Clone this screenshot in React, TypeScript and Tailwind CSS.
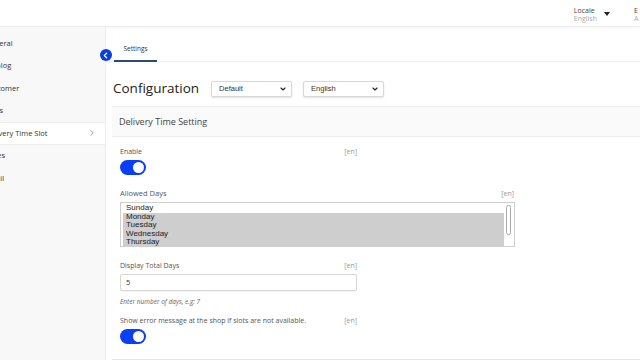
import React from 'react';
import { ChevronLeft, ChevronRight, ChevronDown } from 'lucide-react';

const font = { fontFamily: '"Open Sans", "Noto Sans", sans-serif' };

const Toggle = () => (
  <div className="w-[26px] h-[15px] rounded-full bg-[#0b3ff5] flex items-center justify-end pr-[2px]">
    <div className="w-[11px] h-[11px] rounded-full bg-white" />
  </div>
);

const Select = ({ value }: { value: string }) => (
  <div className="w-[81px] h-[16px] border border-[#d8d8d8] rounded-[2px] shadow-[0_1px_2px_rgba(0,0,0,0.12)] bg-white flex items-center justify-between pl-[7px] pr-[4px]">
    <span className="text-[7.5px] text-[#333]" style={{ fontFamily: '"Liberation Sans", Arial, sans-serif' }}>{value}</span>
    <ChevronDown size={8} strokeWidth={3.5} className="text-[#222]" />
  </div>
);

const sidebarItems = ['General', 'Catalog', 'Customer', 'Sales', 'Delivery Time Slot', 'Taxes', 'Email'];

export default function App() {
  return (
    <div className="w-[640px] h-[360px] overflow-hidden bg-white flex flex-col" style={font}>
      {/* Top bar */}
      <div className="h-[27px] shrink-0 border-b border-[#ececec] shadow-[0_1px_2px_rgba(0,0,0,0.04)] flex items-start justify-end pt-[7px]">
        <div className="flex items-start gap-[7px] mr-[24px]">
          <div className="flex flex-col leading-[8px]">
            <span className="text-[7px] text-[#444]">Locale</span>
            <span className="text-[7px] text-[#aaa]">English</span>
          </div>
          <svg width="6" height="4" viewBox="0 0 6 4" className="mt-[5px]"><path d="M0 0h6L3 4z" fill="#222" /></svg>
        </div>
        <div className="flex flex-col leading-[8px] w-[6px] overflow-hidden">
          <span className="text-[7px] text-[#444]">E</span>
          <span className="text-[7px] text-[#aaa]">A</span>
        </div>
      </div>

      <div className="flex flex-1 min-h-0">
        {/* Sidebar */}
        <div className="w-[106px] shrink-0 bg-[#f8f8f9] border-r border-[#ececec] overflow-hidden pt-[5px]">
          {sidebarItems.map((item) => {
            const active = item === 'Delivery Time Slot';
            return (
              <div
                key={item}
                className={`h-[22.5px] flex items-center justify-between pr-[8px] ${active ? 'bg-white border-y border-[#eeeeee]' : ''}`}
              >
                <span className="text-[7.5px] text-[#333] whitespace-nowrap -ml-[15px]">{item}</span>
                {active && <ChevronRight size={10} strokeWidth={1.5} className="text-[#666]" />}
              </div>
            );
          })}
        </div>

        {/* Main */}
        <div className="flex-1 min-w-0 relative flex flex-col">
          <div className="absolute -left-[6px] top-[22px] w-[12px] h-[12px] rounded-full bg-[#0a3de0] flex items-center justify-center">
            <ChevronLeft size={9} strokeWidth={3.5} className="text-white -ml-[1px]" />
          </div>

          {/* Tabs */}
          <div className="h-[35px] shrink-0 border-b border-[#eeeeee] flex items-end pl-[8px]">
            <div className="h-[35px] w-[43px] flex items-center justify-center pt-[10px] border-b-[2px] border-[#2a4a7e] -mb-[1px]">
              <span className="text-[6.5px] text-[#333]">Settings</span>
            </div>
          </div>

          {/* Heading row */}
          <div className="h-[44px] shrink-0 flex items-center pl-[7px] gap-[11px] pt-[9px]">
            <h1 className="text-[13.5px] font-medium text-[#222] mr-[1px]">Configuration</h1>
            <Select value="Default" />
            <Select value="English" />
          </div>

          {/* Card */}
          <div className="ml-[6px] flex-1 min-h-0 flex flex-col border-b border-[#e6e6e6]">
            <div className="h-[31px] shrink-0 bg-[#fafafa] border-y border-[#eeeeee] flex items-center pl-[7px]">
              <span className="text-[9px] text-[#444]">Delivery Time Setting</span>
            </div>

            <div className="pl-[8px] pt-[10px] flex flex-col">
              <div className="w-[237px] flex justify-between items-center h-[10px]">
                <span className="text-[7px] text-[#555]">Enable</span>
                <span className="text-[7px] text-[#999]">[en]</span>
              </div>
              <div className="mt-[3px]"><Toggle /></div>

              <div className="w-[394px] flex justify-between items-center h-[10px] mt-[14px]">
                <span className="text-[7.5px] text-[#555]">Allowed Days</span>
                <span className="text-[7px] text-[#999]">[en]</span>
              </div>
              <div className="w-[395px] h-[45px] mt-[3px] border border-[#cfcfcf] bg-white flex pl-[2px] pr-[1px] pt-[1px] overflow-hidden" style={{ fontFamily: '"Liberation Sans", Arial, sans-serif' }}>
                <div className="flex-1 flex flex-col text-[8px] leading-[8.5px] text-[#222]">
                  <div className="pl-[3px] pr-[3px]">Sunday</div>
                  <div className="bg-[#cecece] pl-[3px]">Monday</div>
                  <div className="bg-[#cecece] pl-[3px]">Tuesday</div>
                  <div className="bg-[#cecece] pl-[3px]">Wednesday</div>
                  <div className="bg-[#cecece] pl-[3px]">Thursday</div>
                  <div className="bg-[#cecece] pl-[3px]">Friday</div>
                </div>
                <div className="w-[9px] flex justify-center pt-[1px]">
                  <div className="w-[5px] h-[30px] border border-[#a8a8a8] rounded-[3px] bg-white" />
                </div>
              </div>

              <div className="w-[237px] flex justify-between items-center h-[10px] mt-[14px]">
                <span className="text-[7px] text-[#555]">Display Total Days</span>
                <span className="text-[7px] text-[#999]">[en]</span>
              </div>
              <div className="w-[237px] h-[17px] mt-[3px] border border-[#d6d6d6] rounded-[2px] bg-white flex items-center pl-[5px] shadow-[0_1px_1px_rgba(0,0,0,0.05)]">
                <span className="text-[7.5px] text-[#333]">5</span>
              </div>
              <div className="mt-[6px] h-[10px] flex items-center">
                <span className="text-[6.5px] italic text-[#666]">Enter number of days, e.g: 7</span>
              </div>

              <div className="w-[237px] flex justify-between items-center h-[10px] mt-[9px]">
                <span className="text-[7px] text-[#555]">Show error message at the shop if slots are not available.</span>
                <span className="text-[7px] text-[#999]">[en]</span>
              </div>
              <div className="mt-[3px]"><Toggle /></div>
            </div>
          </div>
        </div>
      </div>
    </div>
  );
}
